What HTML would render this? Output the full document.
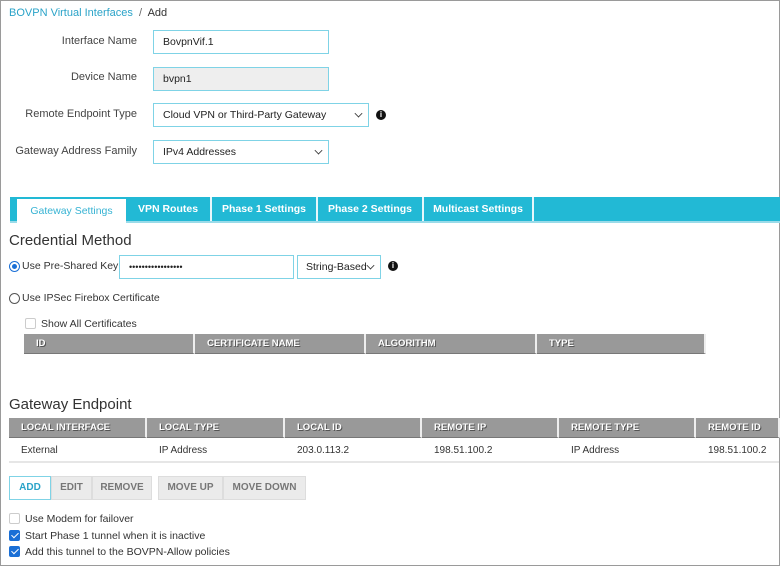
<!DOCTYPE html>
<html><head><style>
*{box-sizing:border-box;margin:0;padding:0}
body{width:780px;height:566px;position:relative;font-family:"Liberation Sans",sans-serif;font-size:11px;color:#333;background:#fff;overflow:hidden}
.frame{position:absolute;left:0;top:0;width:780px;height:566px;border:1px solid #9a9a9a}
.a{position:absolute;white-space:nowrap}
.lbl{position:absolute;text-align:right;width:137px;color:#444;font-size:11px}
.inp{position:absolute;border:1px solid #7fd3e6;background:#fff;height:24px;font-size:10.5px;padding:0 9px;line-height:22px;color:#222;white-space:nowrap}
.chev{position:absolute;right:6px;top:6px;width:7px;height:7px;border-right:1.5px solid #333;border-bottom:1.5px solid #333;transform:rotate(45deg) scale(.8)}
.info{position:absolute;width:10px;height:10px;border-radius:50%;background:#111;color:#fff;font-size:8px;font-weight:bold;text-align:center;line-height:10px}
.tabbar{position:absolute;left:10px;top:197px;width:770px;height:26px;background:#22b9d5;border-bottom:2px solid #9adbe9}
.tab{position:absolute;top:0;height:24px;color:#fff;font-weight:bold;font-size:10.5px;text-align:center;line-height:24px;border-right:2px solid #e6f7fb}
.th{position:absolute;height:20px;background:#999;color:#fff;font-weight:bold;font-size:9.5px;line-height:19px;padding-left:12px;border-right:2px solid #eee;text-shadow:1px 1px 0 #555;border-bottom:1px solid #777}
.btn{position:absolute;top:476px;height:24px;background:#ebebeb;border:1px solid #ddd;color:#777;font-weight:bold;font-size:10px;text-align:center;line-height:22px}
.cb{position:absolute;width:11px;height:11px;border:1px solid #bbb;border-radius:2px;background:#fff}
.cb.on{background:#1a6fd6;border-color:#1a6fd6}
.cb.on:after{content:"";position:absolute;left:3px;top:0px;width:3px;height:6px;border:solid #fff;border-width:0 1.5px 1.5px 0;transform:rotate(45deg)}
.rad{position:absolute;width:11px;height:11px;border-radius:50%;border:1px solid #555;background:#fff}
.h2{position:absolute;font-size:15px;color:#333}
</style></head><body>
<div class="frame"></div>
<div class="a" style="left:9px;top:7px;font-size:11px"><span style="color:#2aa3c8">BOVPN Virtual Interfaces</span> <span style="color:#666">&nbsp;/&nbsp;</span> <span style="color:#333">Add</span></div>

<div class="lbl" style="left:0;top:35px">Interface Name</div>
<div class="inp" style="left:153px;top:30px;width:176px">BovpnVif.1</div>
<div class="lbl" style="left:0;top:71px">Device Name</div>
<div class="inp" style="left:153px;top:67px;width:176px;background:#eee">bvpn1</div>
<div class="lbl" style="left:0;top:108px">Remote Endpoint Type</div>
<div class="inp" style="left:153px;top:103px;width:216px">Cloud VPN or Third-Party Gateway<div class="chev"></div></div>
<div class="info" style="left:376px;top:110px">i</div>
<div class="lbl" style="left:0;top:145px">Gateway Address Family</div>
<div class="inp" style="left:153px;top:140px;width:176px">IPv4 Addresses<div class="chev"></div></div>

<div class="tabbar">
<div class="tab" style="left:7px;top:2px;width:109px;height:24px;background:#fff;color:#37b3d3;font-weight:normal;border-right:none">Gateway Settings</div>
<div class="tab" style="left:116px;width:86px">VPN Routes</div>
<div class="tab" style="left:202px;width:106px">Phase 1 Settings</div>
<div class="tab" style="left:308px;width:106px">Phase 2 Settings</div>
<div class="tab" style="left:414px;width:110px">Multicast Settings</div>
</div>

<div class="h2" style="left:9px;top:232px">Credential Method</div>
<div class="rad" style="left:9px;top:261px;border-color:#1a6fd6"><div style="position:absolute;left:2px;top:2px;width:5px;height:5px;border-radius:50%;background:#1a6fd6"></div></div>
<div class="a" style="left:22px;top:260px;font-size:10.5px">Use Pre-Shared Key</div>
<div class="inp" style="left:119px;top:255px;width:175px;font-size:9px">•••••••••••••••••</div>
<div class="inp" style="left:297px;top:255px;width:84px;padding-left:8px">String-Based<div class="chev"></div></div>
<div class="info" style="left:388px;top:261px">i</div>
<div class="rad" style="left:9px;top:293px"></div>
<div class="a" style="left:22px;top:292px;font-size:10.5px">Use IPSec Firebox Certificate</div>
<div class="cb" style="left:25px;top:318px;border-color:#ccc"></div>
<div class="a" style="left:41px;top:318px;font-size:10.5px">Show All Certificates</div>
<div class="th" style="left:24px;top:334px;width:171px">ID</div>
<div class="th" style="left:195px;top:334px;width:171px">CERTIFICATE NAME</div>
<div class="th" style="left:366px;top:334px;width:171px">ALGORITHM</div>
<div class="th" style="left:537px;top:334px;width:169px">TYPE</div>

<div class="h2" style="left:9px;top:396px">Gateway Endpoint</div>
<div class="th" style="left:9px;top:418px;width:138px">LOCAL INTERFACE</div>
<div class="th" style="left:147px;top:418px;width:138px">LOCAL TYPE</div>
<div class="th" style="left:285px;top:418px;width:137px">LOCAL ID</div>
<div class="th" style="left:422px;top:418px;width:137px">REMOTE IP</div>
<div class="th" style="left:559px;top:418px;width:137px">REMOTE TYPE</div>
<div class="th" style="left:696px;top:418px;width:84px">REMOTE ID</div>
<div class="a" style="left:21px;top:445px;font-size:10px">External</div>
<div class="a" style="left:159px;top:445px;font-size:10px">IP Address</div>
<div class="a" style="left:297px;top:445px;font-size:10px">203.0.113.2</div>
<div class="a" style="left:434px;top:445px;font-size:10px">198.51.100.2</div>
<div class="a" style="left:571px;top:445px;font-size:10px">IP Address</div>
<div class="a" style="left:708px;top:445px;font-size:10px">198.51.100.2</div>
<div style="position:absolute;left:9px;top:461px;width:770px;height:2px;background:#e6e6e6"></div>

<div class="btn" style="left:9px;width:42px;background:#fff;border-color:#7fd3e6;color:#2aa3c8">ADD</div>
<div class="btn" style="left:51px;width:41px">EDIT</div>
<div class="btn" style="left:92px;width:60px">REMOVE</div>
<div class="btn" style="left:158px;width:65px">MOVE UP</div>
<div class="btn" style="left:223px;width:83px">MOVE DOWN</div>

<div class="cb" style="left:9px;top:513px;border-color:#ccc"></div>
<div class="a" style="left:25px;top:513px;font-size:10.5px">Use Modem for failover</div>
<div class="cb on" style="left:9px;top:530px"></div>
<div class="a" style="left:25px;top:530px;font-size:10.5px">Start Phase 1 tunnel when it is inactive</div>
<div class="cb on" style="left:9px;top:546px"></div>
<div class="a" style="left:25px;top:546px;font-size:10.5px">Add this tunnel to the BOVPN-Allow policies</div>
</body></html>
